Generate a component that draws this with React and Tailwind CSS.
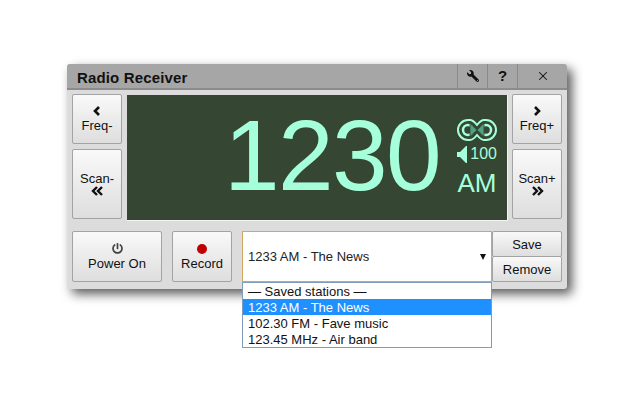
import React from 'react';
import { FaPowerOff, FaWrench } from 'react-icons/fa';
import { X } from 'lucide-react';

const btn = 'flex flex-col items-center justify-center rounded-[2px] border border-[#a3a3a3] bg-gradient-to-b from-[#f9f9f9] to-[#dedede] text-[13px] leading-[15px] text-[#111]';
const row = 'h-[16px] pl-[5px] leading-[18px]';

const Chevron = ({ flip }) => (
    <svg width="8" height="10" viewBox="0 0 8 10" className={flip ? '-scale-x-100' : ''}>
        <path d="M6 1 2 5l4 4" fill="none" stroke="#111" strokeWidth="2.600" />
    </svg>
);

const DoubleChevron = ({ flip }) => (
    <svg width="13" height="10" viewBox="0 0 13 10" className={flip ? '-scale-x-100' : ''}>
        <path d="M6 1 2 5l4 4M11 1 7 5l4 4" fill="none" stroke="#111" strokeWidth="2.400" />
    </svg>
);

const StereoIcon = () => (
    <svg width="40" height="22" viewBox="0 0 40 22">
        <path d="M11 1h2c3 0 5 2.500 7 5 2-2.500 4-5 7-5h2a10 10 0 0 1 0 20h-2c-3 0-5-2.500-7-5-2 2.500-4 5-7 5h-2a10 10 0 0 1 0-20Z" fill="none" stroke="#a6ffdb" strokeWidth="2" />
        <circle cx="11" cy="11" r="5" fill="none" stroke="#a6ffdb" strokeWidth="2.500" />
        <circle cx="29" cy="11" r="5" fill="none" stroke="#a6ffdb" strokeWidth="2.500" />
        <path d="M13 4.500 20 11l-7 6.500ZM27 4.500 20 11l7 6.500Z" fill="#4fa383" stroke="#354632" strokeWidth="0.800" />
    </svg>
);

const SpeakerIcon = () => (
    <svg width="10" height="17" viewBox="0 0 10 17">
        <path d="M0 6h3l6-6h1v17H9L3 11H0Z" fill="#a6ffdb" />
    </svg>
);

const App = () => {
    return (
        <div className="h-[400px] w-[640px] overflow-hidden bg-white pl-[67px] pt-[64px] font-['Liberation_Sans',Arial,sans-serif]">
            <div className="relative h-[225px] w-[500px] rounded-[3px] bg-[#dcdcdc] shadow-[5px_5px_11px_rgba(0,0,0,0.65)]">
                <div className="flex h-[26px] items-stretch rounded-t-[3px] border-b-2 border-[#8c8c8c] bg-[#a6a6a6]">
                    <div className="flex-1 pl-[10px] text-[15px] font-bold leading-[27px] tracking-[0.15px] text-[#111]">Radio Receiver</div>
                    <div className="flex w-[30px] items-center justify-center border-l border-[#8a8a8a]">
                        <FaWrench className="-scale-x-100 text-[12px] text-[#111]" />
                    </div>
                    <div className="flex w-[30px] items-center justify-center border-l border-[#8a8a8a] text-[15px] font-bold text-[#111]">?</div>
                    <div className="flex w-[50px] items-center justify-center border-l border-[#8a8a8a] text-[#111]">
                        <X size={14} strokeWidth={1.8} />
                    </div>
                </div>

                <div className="flex px-[5px] pt-[4px]">
                    <div className="flex w-[50px] flex-col gap-[5px]">
                        <button className={`${btn} h-[50px] gap-[2px]`}>
                            <Chevron />
                            Freq-
                        </button>
                        <button className={`${btn} h-[70px] pb-[1px]`}>
                            Scan-
                            <DoubleChevron />
                        </button>
                    </div>
                    <div className="ml-[5px] mr-[4px] mt-[1px] flex h-[126px] w-[381px] items-center justify-end border-b border-r border-[#f4f4f4] bg-[#354632] pr-[10px] text-[#a6ffdb]">
                        <div className="pb-[6px] text-[100px] leading-none tracking-[-1.600px]">1230</div>
                        <div className="ml-[17px] flex w-[40px] flex-col items-center">
                            <StereoIcon />
                            <div className="flex w-[40px] items-center justify-between pt-[4px] text-[16px] leading-[18px]">
                                <SpeakerIcon />
                                <span>100</span>
                            </div>
                            <div className="pt-[7px] text-[26px] leading-[26px]">AM</div>
                        </div>
                    </div>
                    <div className="flex w-[50px] flex-col gap-[5px]">
                        <button className={`${btn} h-[50px] gap-[2px]`}>
                            <Chevron flip />
                            Freq+
                        </button>
                        <button className={`${btn} h-[70px] pb-[1px]`}>
                            Scan+
                            <DoubleChevron flip />
                        </button>
                    </div>
                </div>

                <div className="flex pl-[5px] pt-[10px]">
                    <button className={`${btn} h-[51px] w-[90px] gap-[2px] pt-[1px]`}>
                        <FaPowerOff className="text-[11px] text-[#444]" />
                        Power On
                    </button>
                    <button className={`${btn} ml-[10px] h-[51px] w-[60px] gap-[2px] pt-[1px]`}>
                        <span className="h-[10px] w-[10px] rounded-full bg-[#c00000]" />
                        Record
                    </button>
                    <div className="relative ml-[10px] h-[51px] w-[250px]">
                        <div className="flex h-full items-center justify-between border border-[#d2a75f] bg-white pl-[5px] pr-[5px] text-[13px] text-[#222]">
                            <span>1233 AM - The News</span>
                            <span className="h-0 w-0 border-x-[3px] border-t-[6px] border-x-transparent border-t-[#111]" />
                        </div>
                        <div className="absolute left-0 top-[51px] z-10 w-[250px] border border-[#7f9db9] bg-white text-[13px] text-[#111]">
                            <div className={row}>— Saved stations —</div>
                            <div className={`${row} bg-[#1e90ff] text-white`}>1233 AM - The News</div>
                            <div className={row}>102.30 FM - Fave music</div>
                            <div className={row}>123.45 MHz - Air band</div>
                        </div>
                    </div>
                    <div className="flex w-[70px] flex-col">
                        <button className={`${btn} h-[26px]`}>Save</button>
                        <button className={`${btn} -mt-px h-[26px]`}>Remove</button>
                    </div>
                </div>
            </div>
        </div>
    );
};

export default App;
